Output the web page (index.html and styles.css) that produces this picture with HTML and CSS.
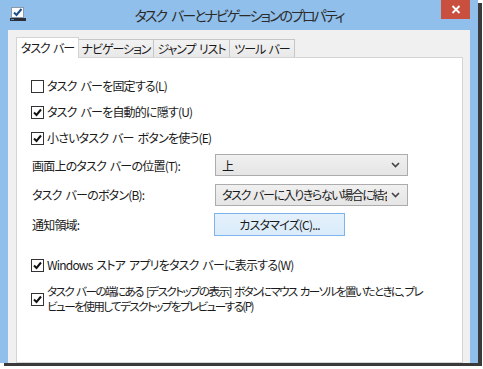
FILE: index.html
```html
<!DOCTYPE html>
<html lang="ja">
<head>
<meta charset="utf-8">
<title>タスク バーとナビゲーションのプロパティ</title>
<link rel="stylesheet" href="styles.css">
</head>
<body>
<div class="window">
  <div class="titlebar">
    <svg class="app-icon" width="17" height="15" viewBox="0 0 17 15">
      <rect x="1.5" y="0.5" width="12" height="10" fill="#fdfdfd" stroke="#8a9aa8"/>
      <path d="M4 5.5 L6.5 8 L11.5 2" fill="none" stroke="#1d4f8c" stroke-width="2"/>
      <rect x="0" y="11" width="16" height="3" fill="#2a2f3a"/>
      <rect x="1" y="12" width="3" height="1" fill="#5a8fd0"/>
    </svg>
    <div class="title">タスク バーとナビゲーションのプロパティ</div>
    <div class="close">
      <svg width="10" height="9" viewBox="0 0 10 9"><path d="M1.5 1 L8.5 8 M8.5 1 L1.5 8" stroke="#fff" stroke-width="1.8"/></svg>
    </div>
  </div>
  <div class="client">
    <div class="tabs">
      <div class="tab active">タスク バー</div>
      <div class="tab">ナビゲーション</div>
      <div class="tab">ジャンプ リスト</div>
      <div class="tab">ツール バー</div>
    </div>
    <div class="panel">
      <div class="check first">
        <span class="box"></span>
        <span class="label">タスク バーを固定する(L)</span>
      </div>
      <div class="check">
        <span class="box"><svg viewBox="0 0 11 11" width="11" height="11"><path d="M2 5.5 L4.5 8 L9 2.5" fill="none" stroke="#111" stroke-width="2"/></svg></span>
        <span class="label">タスク バーを自動的に隠す(U)</span>
      </div>
      <div class="check">
        <span class="box"><svg viewBox="0 0 11 11" width="11" height="11"><path d="M2 5.5 L4.5 8 L9 2.5" fill="none" stroke="#111" stroke-width="2"/></svg></span>
        <span class="label">小さいタスク バー ボタンを使う(E)</span>
      </div>

      <div class="fields">
        <span class="field-label">画面上のタスク バーの位置(T):</span>
        <div class="combo">
          <span class="combo-text">上</span>
          <svg class="chev" width="9" height="6" viewBox="0 0 9 6"><path d="M1 1 L4.5 4.5 L8 1" fill="none" stroke="#444" stroke-width="1.6"/></svg>
        </div>
        <span class="field-label">タスク バーのボタン(B):</span>
        <div class="combo">
          <span class="combo-text">タスク バーに入りきらない場合に結合</span>
          <svg class="chev" width="9" height="6" viewBox="0 0 9 6"><path d="M1 1 L4.5 4.5 L8 1" fill="none" stroke="#444" stroke-width="1.6"/></svg>
        </div>
        <span class="field-label">通知領域:</span>
        <div class="button">カスタマイズ(C)...</div>
      </div>

      <div class="check store">
        <span class="box"><svg viewBox="0 0 11 11" width="11" height="11"><path d="M2 5.5 L4.5 8 L9 2.5" fill="none" stroke="#111" stroke-width="2"/></svg></span>
        <span class="label">Windows ストア アプリをタスク バーに表示する(W)</span>
      </div>
      <div class="check multi">
        <span class="box"><svg viewBox="0 0 11 11" width="11" height="11"><path d="M2 5.5 L4.5 8 L9 2.5" fill="none" stroke="#111" stroke-width="2"/></svg></span>
        <span class="label">タスク バーの端にある [デスクトップの表示] ボタンにマウス カーソルを置いたときに、プレ<br>ビューを使用してデスクトップをプレビューする(P)</span>
      </div>
    </div>
  </div>
  <svg class="cursor" width="14" height="21" viewBox="0 0 14 21">
    <path d="M0.5 0.5 L0.5 16.5 L4.3 12.8 L7.2 19.4 L9.6 18.3 L6.8 11.9 L12 11.9 Z" fill="#fff" stroke="#000" stroke-width="1" stroke-linejoin="miter"/>
  </svg>
</div>
</body>
</html>
```

FILE: styles.css
```css
html, body {
  margin: 0;
  padding: 0;
  background: #ffffff;
}

body {
  width: 483px;
  height: 369px;
  overflow: hidden;
  font-family: "Noto Sans CJK JP", "Noto Sans", sans-serif;
  font-feature-settings: "palt";
  font-size: 12px;
  letter-spacing: -0.8px;
  word-spacing: 2px;
  color: #1a1a1a;
}

.window {
  position: relative;
  width: 478px;
  height: 363px;
  background: #8fbfea;
  box-shadow: 4px 3px 0 #3a3a3a;
  display: flex;
  flex-direction: column;
}

.titlebar {
  height: 30px;
  display: grid;
  grid-template-columns: 1fr auto 1fr;
  align-items: start;
}

.app-icon {
  margin: 7px 0 0 10px;
}

.title {
  font-size: 14px;
  letter-spacing: -2px;
  word-spacing: 4px;
  line-height: 30px;
  color: #2b2b2b;
  white-space: nowrap;
}

.close {
  justify-self: end;
  width: 29px;
  height: 19px;
  margin-right: 8px;
  background: #c9503f;
  display: flex;
  align-items: center;
  justify-content: center;
}

.client {
  flex: 1;
  margin: 0 8px;
  background: #f0f0f0;
  padding-top: 7px;
  overflow: hidden;
  display: flex;
  flex-direction: column;
}

.tabs {
  display: flex;
  align-items: flex-end;
  padding-left: 8px;
  margin-bottom: -1px;
  height: 21px;
}

.tab {
  height: 18px;
  line-height: 18px;
  border: 1px solid #c6c6c6;
  border-bottom: none;
  background: linear-gradient(#f2f2f2, #e8e8e8);
  color: #1a1a1a;
  white-space: nowrap;
  text-align: center;
  letter-spacing: -1.1px;
  margin-left: -1px;
}

.tab:nth-child(1) { width: 61px; margin-left: 0; }
.tab:nth-child(2) { width: 74px; }
.tab:nth-child(3) { width: 75px; }
.tab:nth-child(4) { width: 64px; }

.tab.active {
  position: relative;
  z-index: 2;
  height: 20px;
  line-height: 20px;
  background: #ffffff;
  border-color: #d4d4d4;
}

.panel {
  position: relative;
  z-index: 1;
  flex: 1;
  margin: 0 7px 0 8px;
  background: #ffffff;
  border: 1px solid #d4d4d4;
  padding: 20px 14px 0 14px;
  display: flex;
  flex-direction: column;
}

.check {
  display: flex;
  align-items: center;
  line-height: 16px;
  margin-top: 10px;
  white-space: nowrap;
}

.check.first {
  margin-top: 0;
}

.box {
  width: 11px;
  height: 11px;
  border: 1px solid #333333;
  background: #ffffff;
  margin-right: 3px;
  flex: none;
  display: flex;
}

.fields {
  display: grid;
  grid-template-columns: 184px 193px;
  grid-template-rows: 22px 23px 23px;
  row-gap: 7px;
  align-items: center;
  margin-top: 8px;
}

.field-label {
  padding-left: 1px;
  white-space: nowrap;
}

.combo {
  height: 20px;
  border: 1px solid #acacac;
  background: linear-gradient(#f0f0f0, #e5e5e5);
  display: flex;
  align-items: center;
  padding: 0 7px 0 6px;
  overflow: hidden;
}

.combo-text {
  flex: 1;
  white-space: nowrap;
  overflow: hidden;
  letter-spacing: -1.4px;
}

.chev {
  flex: none;
  margin-left: 4px;
}

.button {
  width: 129px;
  height: 21px;
  margin-left: -1px;
  border: 1px solid #7eb4ea;
  background: linear-gradient(#e5f1fb, #d9ebfa);
  text-align: center;
  line-height: 21px;
}

.check.store {
  margin-top: 21px;
}

.check.multi {
  margin-top: 11px;
  line-height: 15px;
}

.check.multi .label {
  font-size: 11.6px;
  letter-spacing: -1.6px;
}

.cursor {
  position: absolute;
  left: 259px;
  top: 229px;
}
```
